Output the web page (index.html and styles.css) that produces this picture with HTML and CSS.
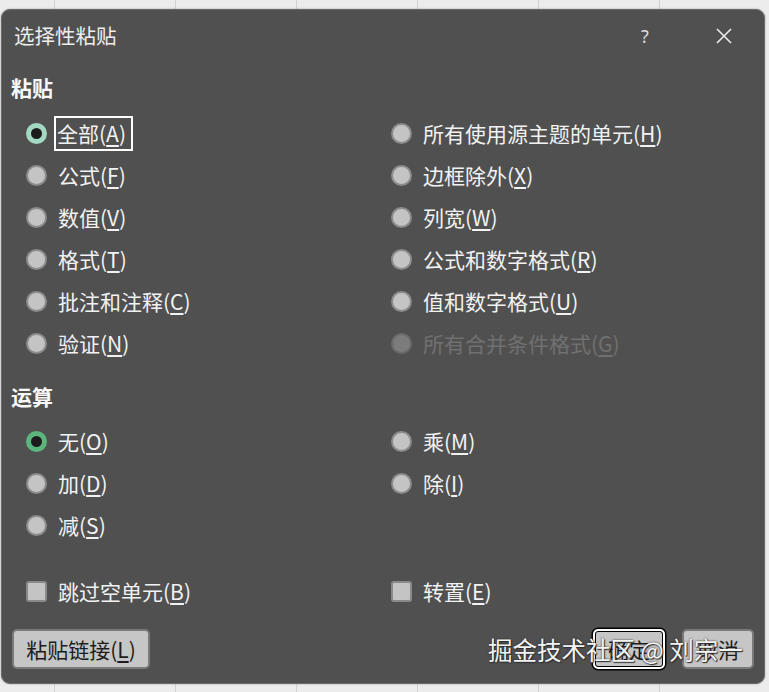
FILE: index.html
```html
<!DOCTYPE html>
<html lang="zh-CN">
<head>
<meta charset="utf-8">
<title>选择性粘贴</title>
<link rel="stylesheet" href="styles.css">
</head>
<body>
<div class="dialog">
  <div class="titlebar">
    <span class="title">选择性粘贴</span>
    <span class="help">?</span>
    <span class="close"><svg width="16" height="16" viewBox="0 0 16 16"><path d="M1 1 L15 15 M15 1 L1 15" stroke="#ececec" stroke-width="1.6" fill="none"/></svg></span>
  </div>

  <div class="section first">粘贴</div>
  <div class="grid">
    <div class="opt"><span class="radio on mint"></span><span class="lbl focus">全部(<u>A</u>)</span></div>
    <div class="opt"><span class="radio"></span><span class="lbl">所有使用源主题的单元(<u>H</u>)</span></div>
    <div class="opt"><span class="radio"></span><span class="lbl">公式(<u>F</u>)</span></div>
    <div class="opt"><span class="radio"></span><span class="lbl">边框除外(<u>X</u>)</span></div>
    <div class="opt"><span class="radio"></span><span class="lbl">数值(<u>V</u>)</span></div>
    <div class="opt"><span class="radio"></span><span class="lbl">列宽(<u>W</u>)</span></div>
    <div class="opt"><span class="radio"></span><span class="lbl">格式(<u>T</u>)</span></div>
    <div class="opt"><span class="radio"></span><span class="lbl">公式和数字格式(<u>R</u>)</span></div>
    <div class="opt"><span class="radio"></span><span class="lbl">批注和注释(<u>C</u>)</span></div>
    <div class="opt"><span class="radio"></span><span class="lbl">值和数字格式(<u>U</u>)</span></div>
    <div class="opt"><span class="radio"></span><span class="lbl">验证(<u>N</u>)</span></div>
    <div class="opt disabled"><span class="radio"></span><span class="lbl">所有合并条件格式(<u>G</u>)</span></div>
  </div>

  <div class="section second">运算</div>
  <div class="grid">
    <div class="opt"><span class="radio on green"></span><span class="lbl">无(<u>O</u>)</span></div>
    <div class="opt"><span class="radio"></span><span class="lbl">乘(<u>M</u>)</span></div>
    <div class="opt"><span class="radio"></span><span class="lbl">加(<u>D</u>)</span></div>
    <div class="opt"><span class="radio"></span><span class="lbl">除(<u>I</u>)</span></div>
    <div class="opt"><span class="radio"></span><span class="lbl">减(<u>S</u>)</span></div>
  </div>

  <div class="grid checks">
    <div class="opt"><span class="check"></span><span class="lbl">跳过空单元(<u>B</u>)</span></div>
    <div class="opt"><span class="check"></span><span class="lbl">转置(<u>E</u>)</span></div>
  </div>

  <div class="buttons">
    <button class="btn link">粘贴链接(<u>L</u>)</button>
    <span class="spacer"></span>
    <button class="btn ok">确定</button>
    <button class="btn cancel">取消</button>
  </div>
</div>
<div class="watermark">掘金技术社区 @ 刘宗一</div>
</body>
</html>
```

FILE: styles.css
```css
* { box-sizing: border-box; }
html, body { margin: 0; padding: 0; }
body {
  width: 769px;
  height: 692px;
  overflow: hidden;
  position: relative;
  background-color: #ececec;
  background-image: repeating-linear-gradient(90deg, transparent 0 54px, #d2d2d2 54px 55px, transparent 55px 121px);
  font-family: "Noto Sans CJK SC", "Noto Sans", sans-serif;
  padding-top: 9px;
  padding-left: 1px;
}
.dialog {
  width: 764px;
  height: 675px;
  background: #505050;
  border: 1px solid #6a6a6a;
  border-radius: 9px;
  color: #f2f2f2;
  display: flex;
  flex-direction: column;
  box-shadow: 0 0 2px rgba(0,0,0,0.35);
}
.titlebar {
  height: 51px;
  display: flex;
  align-items: center;
  padding: 0 20px 0 12px;
}
.title {
  font-size: 20.5px;
  color: #ededed;
  line-height: 1;
  flex: 1;
}
.help {
  width: 40px;
  text-align: center;
  font-family: "Noto Sans", sans-serif;
  font-size: 18px;
  color: #dcdcdc;
  line-height: 1;
}
.close {
  width: 40px;
  margin-left: 39px;
  display: flex;
  justify-content: center;
  align-items: center;
}
.section {
  padding-left: 9px;
  font-size: 21px;
  font-weight: 700;
  display: flex;
  align-items: center;
  line-height: 1;
  color: #f8f8f8;
}
.section.first { height: 51px; padding-top: 2px; }
.section.second { height: 56px; padding-top: 8px; }
.grid {
  display: grid;
  grid-template-columns: 365px 1fr;
  grid-auto-rows: 42px;
  padding-left: 24px;
}
.grid.checks { margin-top: 24px; }
.opt {
  display: flex;
  align-items: center;
  font-size: 21px;
  line-height: 1;
}
.lbl {
  margin-left: 9px;
  padding: 5px 0;
  border: 2px solid transparent;
  white-space: nowrap;
}
.lbl u { text-underline-offset: 3px; text-decoration-thickness: 1.5px; }
.lbl.focus {
  border-color: #ffffff;
  padding: 5px 5px 5px 1px;
  margin-left: 7px;
}
.radio {
  width: 21px;
  height: 21px;
  border-radius: 50%;
  background: #c4c4c4;
  border: 2px solid #8c8c8c;
  flex: none;
}
.radio.on {
  background: #1c1c1c;
  border: 5px solid #5bb57c;
}
.radio.on.mint { border-color: #a3d9c3; }
.opt.disabled { color: #707070; }
.opt.disabled .radio { background: #7c7c7c; border-color: #6a6a6a; }
.check {
  width: 21px;
  height: 21px;
  background: #c4c4c4;
  border: 2px solid #8a8a8a;
  border-radius: 3px;
  flex: none;
}
.buttons {
  margin-top: 17px;
  height: 40px;
  display: flex;
  padding: 0 10px;
}
.spacer { flex: 1; }
.btn {
  font-family: "Noto Sans CJK SC", "Noto Sans", sans-serif;
  font-size: 21px;
  line-height: 1;
  color: #1c1c1c;
  background: #c6c6c6;
  border: 2px solid #7a7a7a;
  border-radius: 5px;
  height: 40px;
  padding: 0;
}
.btn u { text-underline-offset: 3px; text-decoration-thickness: 1.5px; }
.btn.link { width: 138px; }
.btn.ok {
  width: 72px;
  border: 2px solid #ffffff;
  box-shadow: 0 0 0 1.5px #000000, inset 0 0 0 1px #000000;
}
.btn.cancel { width: 72px; margin-left: 17px; }
.watermark {
  position: absolute;
  left: 488px;
  top: 638px;
  font-size: 24.5px;
  line-height: 1;
  color: #f4f4f4;
  white-space: nowrap;
  text-shadow: 0 0 2px #222, 1px 1px 1px #333;
}
```
